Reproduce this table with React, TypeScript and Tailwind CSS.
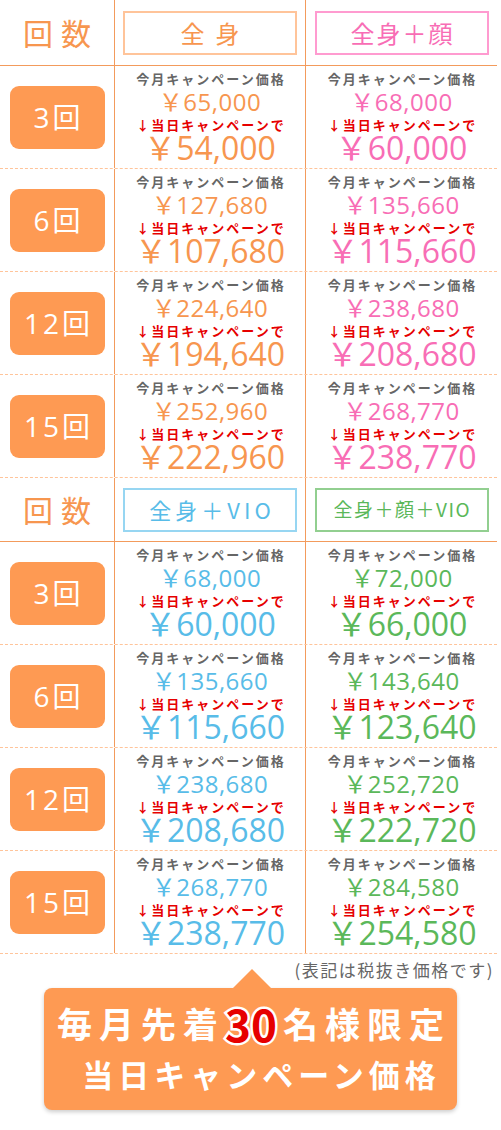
import React from "react";

type Cell = { normal: string; sale: string; color: string };
type Row = { label: string; cells: [Cell, Cell] };

const O = "text-[#F7964F]";
const P = "text-[#F86DB5]";
const B = "text-[#58BCE8]";
const G = "text-[#5BB85A]";

const table1: Row[] = [
  { label: "3回", cells: [{ normal: "65,000", sale: "54,000", color: O }, { normal: "68,000", sale: "60,000", color: P }] },
  { label: "6回", cells: [{ normal: "127,680", sale: "107,680", color: O }, { normal: "135,660", sale: "115,660", color: P }] },
  { label: "12回", cells: [{ normal: "224,640", sale: "194,640", color: O }, { normal: "238,680", sale: "208,680", color: P }] },
  { label: "15回", cells: [{ normal: "252,960", sale: "222,960", color: O }, { normal: "268,770", sale: "238,770", color: P }] },
];

const table2: Row[] = [
  { label: "3回", cells: [{ normal: "68,000", sale: "60,000", color: B }, { normal: "72,000", sale: "66,000", color: G }] },
  { label: "6回", cells: [{ normal: "135,660", sale: "115,660", color: B }, { normal: "143,640", sale: "123,640", color: G }] },
  { label: "12回", cells: [{ normal: "238,680", sale: "208,680", color: B }, { normal: "252,720", sale: "222,720", color: G }] },
  { label: "15回", cells: [{ normal: "268,770", sale: "238,770", color: B }, { normal: "284,580", sale: "254,580", color: G }] },
];

function PriceCell({ c }: { c: Cell }) {
  return (
    <div className="flex flex-col items-center pt-[5px]">
      <div className="h-[16px] leading-[16px] text-[13px] font-bold tracking-[2px] pl-[2px] text-[#666666] font-['Noto_Sans_CJK_JP',sans-serif]">
        今月キャンペーン価格
      </div>
      <div className={`mt-[3px] h-[24px] leading-[24px] text-[24px] tracking-[0.5px] font-['Open_Sans','Noto_Sans_CJK_JP',sans-serif] ${c.color}`}>
        ￥{c.normal}
      </div>
      <div className="mt-[4px] h-[14px] leading-[14px] text-[13px] font-bold tracking-[2px] pl-[2px] text-[#E60000] font-['Noto_Sans_CJK_JP',sans-serif]">
        ↓当日キャンペーンで
      </div>
      <div className={`h-[32px] leading-[32px] text-[32px] font-['Open_Sans','Noto_Sans_CJK_JP',sans-serif] ${c.color}`}>
        ￥{c.sale}
      </div>
    </div>
  );
}

function Rows({ rows }: { rows: Row[] }) {
  return (
    <>
      {rows.map((r) => (
        <div key={r.label} className="grid grid-cols-[115px_191px_191px] h-[103px] border-b border-dashed border-[#FFC49A]">
          <div className="flex items-center justify-center border-r border-[#F39B5C]">
            <div className="w-[95px] h-[63px] rounded-[9px] bg-[#FE9A53] flex items-center justify-center text-white text-[28px] tracking-[3px] pl-[3px] font-['Open_Sans','Noto_Sans_CJK_JP',sans-serif]">
              {r.label}
            </div>
          </div>
          <div className="border-r border-[#F39B5C]">
            <PriceCell c={r.cells[0]} />
          </div>
          <div>
            <PriceCell c={r.cells[1]} />
          </div>
        </div>
      ))}
    </>
  );
}

function Header({
  h,
  a,
  b,
}: {
  h: string;
  a: React.ReactNode;
  b: React.ReactNode;
}) {
  return (
    <div className={`grid grid-cols-[115px_191px_191px] ${h} border-b border-[#F39B5C]`}>
      <div className="flex items-center justify-center border-r border-[#F39B5C]">
        <span className="text-[30px] tracking-[8px] pl-[8px] text-[#F7964F] font-['Noto_Sans_CJK_JP',sans-serif]">回数</span>
      </div>
      <div className="flex items-center justify-center border-r border-[#F39B5C]">{a}</div>
      <div className="flex items-center justify-center">{b}</div>
    </div>
  );
}

export default function App() {
  return (
    <div className="w-[501px] h-[1130px] bg-white font-['Noto_Sans_CJK_JP',sans-serif]">
      <div className="w-[497px]">
        <Header
          h="h-[66px]"
          a={
            <div className="w-[174px] h-[44px] border-2 border-[#FFC49A] flex items-center justify-center text-[24px] tracking-[11px] pl-[11px] text-[#F7964F]">
              全身
            </div>
          }
          b={
            <div className="w-[174px] h-[44px] border-2 border-[#FF9BD0] flex items-center justify-center text-[24px] tracking-[2px] pl-[2px] text-[#F86DB5]">
              全身＋顔
            </div>
          }
        />
        <Rows rows={table1} />
        <Header
          h="h-[64px]"
          a={
            <div className="w-[174px] h-[44px] border-2 border-[#97D6F2] flex items-center justify-center text-[22px] tracking-[4px] pl-[4px] text-[#58BCE8]">
              全身＋VIO
            </div>
          }
          b={
            <div className="w-[174px] h-[44px] border-2 border-[#92CF90] flex items-center justify-center text-[19px] tracking-[1.5px] pl-[1.5px] text-[#5BB85A]">
              全身＋顔＋VIO
            </div>
          }
        />
        <Rows rows={table2} />
      </div>

      <div className="h-[34px] flex justify-end pr-[7px] pt-[4px]">
        <span className="text-[17px] leading-[24px] tracking-[1.5px] text-[#666666]">(表記は税抜き価格です)</span>
      </div>

      <div className="relative ml-[44px] w-[413px] h-[122px] rounded-[8px] bg-[#FE9A53] shadow-[0_2px_4px_rgba(0,0,0,0.2)] pt-[10px]">
        <div className="absolute left-[189px] top-[-19px] w-0 h-0 border-l-[19px] border-r-[19px] border-b-[19px] border-l-transparent border-r-transparent border-b-[#FE9A53]" />
        <div className="h-[50px] flex items-center justify-center text-white font-bold text-[35px] tracking-[7px] pl-[7px]">
          <span>毎月先着</span>
          <span className="text-[44px] text-[#E60000] tracking-[0px] [-webkit-text-stroke:5px_white] [paint-order:stroke_fill] mr-[6px]">30</span>
          <span>名様限定</span>
        </div>
        <div className="mt-[6px] h-[40px] flex items-center justify-center text-white font-bold text-[31px] tracking-[5px] pl-[22px]">
          当日キャンペーン価格
        </div>
      </div>
    </div>
  );
}
